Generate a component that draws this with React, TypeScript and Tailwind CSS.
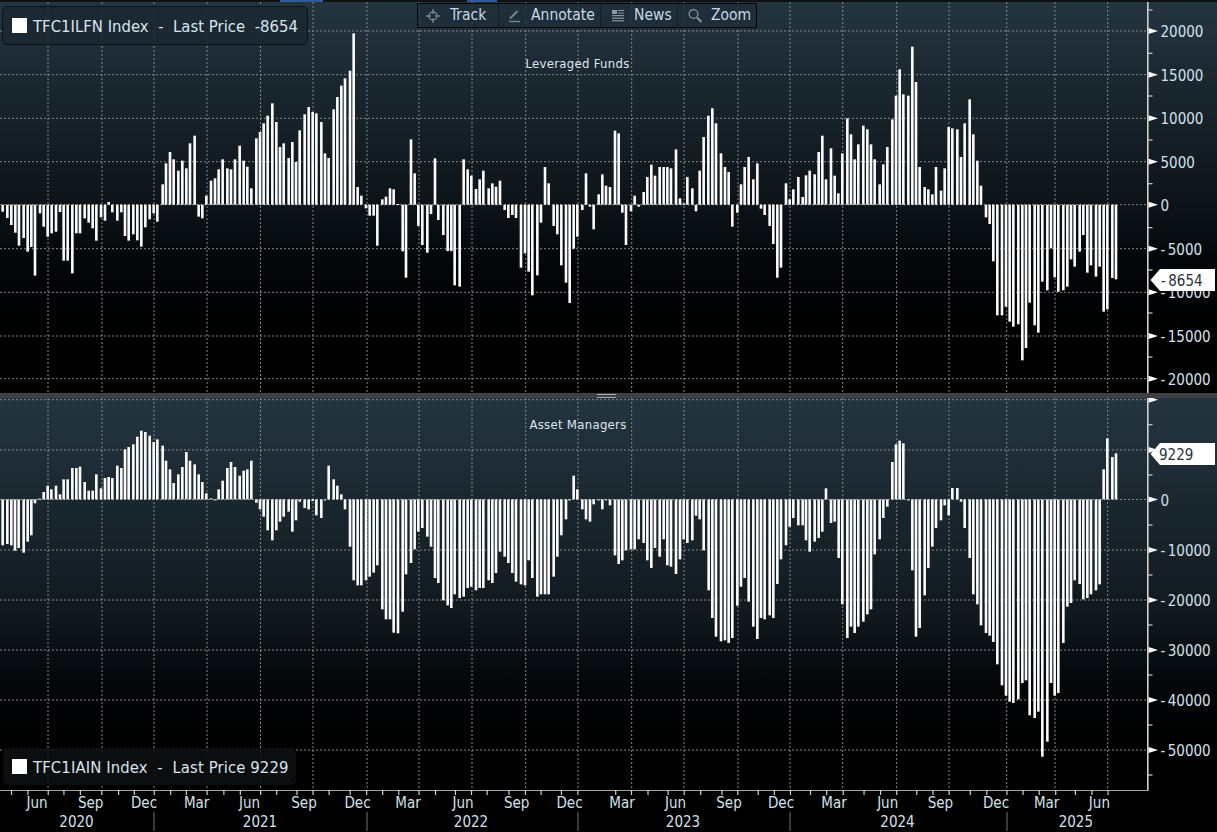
import React from "react";

const GX = [48,102,154,207,260.5,313,367,419,472,525.7,578,631.7,684,738,790,842.7,896.7,949,1006.7,1055,1107.7];

// flat [x3, y3] lists read from the picture, negative y3 = lower-crop value
const TOP: [number, number[]][] = [
  [0,[8,635,22,654,34,675,46,698,57,737,71,714,83,755,94,741,105,827,120,640,131,680,143,710,155,700,168,695,180,636,191,782,203,782,217,820,229,700,240,700,254,655,266,668,278,685,289,722,303,652,315,662,326,606,337,637,352,662,364,637,375,708,386,722,400,703,412,721,424,740,436,682,449,658,461,640,472,665,488,553,498,490,510,456,521,478,535,512,547,482,559,505,570,430,584,407,596,650,607,655,619,587,633,542,645,535,656,508,668,478,682,505,693,508,705,478,719,437,731,482,742,500,754,565,769,415,780,396,791,370,803,347,817,310,829,366,840,441,851,430,866,474,877,426,888,486,899,391,914,343,926,321,938,336,949,340,964,366,975,460,986,474,1001,328,1012,291,1024,257,1035,235,1050,212,1061,100,1073,561,1084,587,1098,625,1109,647,1121,647,1132,737,1147,598,1158,590,1170,565,1181,568,1194,612]],
  [1200,[8,-184,18,-263,33,418,44,520,55,-108,67,-165,82,-188,93,-72,105,475,115,-90,130,-135,143,-183,154,-183,164,-286,179,-290,191,478,203,508,214,527,228,567,239,538,250,512,266,565,277,550,288,560,300,542,314,-60,325,-84,337,-75,348,-84,363,-233,375,-190,386,-245,397,-316,412,-256,423,-98,435,501,446,550,461,-108,472,-133,484,-226,498,-278,509,-339,521,-176,532,-140,547,-60,558,520,570,-50,581,-118,596,583,607,523,618,557,630,561,645,392,656,400,667,-68,678,-165,693,-64,704,587,716,-50,731,576,742,531,754,494,765,527,779,501,791,501,802,501,813,505,828,448,840,595,851,610,862,531,877,565,888,-64,899,512,911,411,925,347,937,325,948,370,963,460,975,501,986,516,997,-110,1012,-68,1023,553,1034,501,1046,471,1060,538,1072,490,1083,-56,1094,-75,1109,-108,1120,-162,1132,-263,1143,-233,1158,550,1169,598,1180,568,1195,531]],
  [2400,[8,591,18,526,29,512,44,523,56,456,67,407,78,538,93,445,104,527,115,580,127,460,142,355,153,403,164,478,175,433,190,377,202,388,213,433,224,478,239,553,250,493,262,441,277,358,288,287,299,208,310,283,325,287,337,140,348,246,359,501,374,561,385,568,397,583,408,501,423,572,434,505,446,381,457,385,472,388,483,471,494,370,509,298,520,403,532,482,543,557,558,-82,569,-102,580,-214,592,-376,606,-376,618,-350,629,-395,640,-410,655,-403,667,-511,678,-474,689,-338,704,-406,715,-428,727,-275,742,-301,753,-175,764,-262,775,-305,790,-301,802,-290,813,-208,824,-230,839,-185,850,-135,862,-248,873,-226,888,-260,899,-230,911,-365,922,-358,937,-264,948,-268]],
];

const BOT: [number, number[]][] = [
  [0,[8,436,22,432,34,436,45,452,56,444,71,458,83,425,94,406,105,310,118,296,131,276,143,257,154,268,168,257,180,283,191,238,203,238,217,204,229,204,240,200,254,246,266,272,278,272,289,223,303,265,315,234,326,231,337,234,352,197,364,204,375,148,386,141,400,133,412,110,424,92,436,96,449,107,461,126,472,118,488,137,498,182,510,208,521,249,535,223,547,201,559,156,570,182,584,193,596,223,607,246,619,280,633,295,645,300,656,268,668,242,682,204,693,186,705,201,719,227,731,212,742,208,754,182,769,308,780,328,791,350,803,391,817,421,829,391,840,365,851,350,866,335,877,395,888,361,899,305,914,324,926,328,938,303,949,346,964,354,975,300,986,197,1001,238,1012,257,1024,283,1035,328,1050,440,1061,541,1073,556,1084,556,1098,541,1109,530,1121,518,1132,496,1147,628,1158,658,1170,658,1181,698,1194,700]],
  [1200,[8,635,18,523,33,489,44,448,55,395,67,384,82,410,93,440,105,534,115,549,130,601,143,616,154,624,164,583,179,594,191,590,203,564,214,560,228,571,239,564,250,564,266,541,277,549,288,519,300,455,314,470,325,489,337,519,348,545,363,553,375,556,386,481,397,534,412,590,423,583,435,583,446,583,461,530,472,470,484,406,498,358,509,300,521,227,532,268,547,328,558,358,570,365,581,313,596,300,607,328,618,300,630,316,645,466,656,492,667,481,678,451,693,448,704,448,716,418,731,429,742,481,754,504,765,444,779,470,791,418,802,496,813,500,828,522,840,478,851,418,862,429,877,421,888,347,899,358,911,451,926,571,937,654,948,710,963,724,975,721,986,729,997,714,1012,617,1023,560,1034,534,1046,605,1060,680,1072,717,1083,654,1094,658,1109,646,1120,654,1132,552,1143,478,1158,436,1169,380,1180,354,1195,376]],
  [2400,[8,376,18,421,29,455,44,425,56,414,67,395,78,265,93,369,104,365,116,474,127,613,142,714,153,680,164,699,175,680,190,665,202,643,213,628,224,463,239,418,250,354,262,320,277,186,288,133,299,122,310,130,325,300,337,511,348,710,359,684,374,586,385,504,397,440,408,384,423,361,434,316,446,346,457,264,472,264,483,305,494,384,509,474,520,583,532,613,543,676,558,699,569,707,580,726,592,793,606,856,618,887,629,905,640,909,655,898,667,849,678,841,689,946,704,954,715,935,727,1070,742,1025,753,849,764,887,775,879,790,729,802,620,813,609,824,541,839,552,850,598,862,594,873,583,888,571,899,553,911,208,922,115,937,171,948,160]],
];

const XT = [30,73,126,167,210,266,310,351,403,446,487,541,585,628,681,723,776,818,860,915,958,1000,1042,1095,1138,1190,1232,1273,1330,1373,1414,1467,1510].map((v) => v / 2.613)
  .concat([40,80,122,173,214,256,310,350,402,443,484,535,576,618,671,713,754,805,846,887,941,983,1034,1075,1116,1158,1208,1250,1291].map((v) => 600 + v / 2.541));

const MONTHS: [string, number][] = [["Jun",37],["Sep",90.7],["Dec",144],["Mar",196.7],["Jun",249.5],["Sep",304],["Dec",357.5],["Mar",408],["Jun",463],["Sep",516.7],["Dec",569.5],["Mar",622],["Jun",675.5],["Sep",729],["Dec",781],["Mar",834],["Jun",887.7],["Sep",940.4],["Dec",996],["Mar",1046.7],["Jun",1099.4]];
const YEARS: [string, number][] = [["2020",76.5],["2021",260],["2022",471],["2023",683],["2024",897.5],["2025",1075.8]];
const SEPS = [154,367,578,790,1007];

function Arrow({ y }: { y: number }) {
  return <polygon points={`1148.5,${y - 3} 1158,${y} 1148.5,${y + 3}`} className="fill-white" />;
}

function Bars({ data, map, base }: { data: [number, number[]][]; map: (y: number) => number; base: number }) {
  const out: React.ReactNode[] = [];
  data.forEach(([off, list], s) => {
    for (let i = 0; i < list.length; i += 2) {
      const x = (off + list[i]) / 3;
      const y = map(list[i + 1]);
      const top = Math.min(y, base);
      out.push(<rect key={`${s}-${i}`} x={x - 1.3} y={top} width={2.6} height={Math.max(Math.abs(y - base), 1)} className="fill-[#fbfbfb]" />);
    }
  });
  return <g>{out}</g>;
}

function Grid({ ys, y0, y1 }: { ys: number[]; y0: number; y1: number }) {
  return (
    <g className="stroke-[#85898c]" strokeWidth={1} strokeDasharray="2 2">
      {ys.map((y) => <line key={y} x1={0} x2={1148} y1={y} y2={y} />)}
      {GX.map((x) => <line key={x} x1={x} x2={x} y1={y0} y2={y1} />)}
    </g>
  );
}

function Num({ t }: { t: string }) {
  return t[0] === "-" ? (
    <>
      <tspan>-</tspan>
      <tspan dx={2.4}>{t.slice(1)}</tspan>
    </>
  ) : (
    <>{t}</>
  );
}

function Badge({ y, text, x }: { y: number; text: string; x: number }) {
  return (
    <g>
      <polygon points={`1150.5,${y} 1160,${y - 11} 1215,${y - 11} 1215,${y + 11} 1160,${y + 11}`} className="fill-white" />
      <text x={x} y={y + 5.5} className="fill-[#26323a] text-[15px]"><Num t={text} /></text>
    </g>
  );
}

function Axis({ y0, y1, majors, minors, labels }: { y0: number; y1: number; majors: number[]; minors: number[]; labels: [string, number][] }) {
  return (
    <g>
      <rect x={1147} y={y0} width={1.6} height={y1 - y0} className="fill-[#cfcfcf]" />
      {minors.map((y) => <rect key={y} x={1148} y={y - 0.6} width={4.5} height={1.2} className="fill-[#cfcfcf]" />)}
      {majors.map((y) => <Arrow key={y} y={y} />)}
      {labels.map(([t, y]) => <text key={t} x={1160.5} y={y + 6} className="fill-[#d3e0ec] text-[15px]"><Num t={t} /></text>)}
    </g>
  );
}

function Track() {
  return (
    <svg width="16" height="16" viewBox="0 0 16 16" fill="none" className="stroke-[#79838a] shrink-0">
      <circle cx="8" cy="8" r="4" strokeWidth="1.4" />
      <path d="M8 1v5M8 10v5M1 8h5M10 8h5" strokeWidth="1.4" />
    </svg>
  );
}
function Pencil() {
  return (
    <svg width="14" height="14" viewBox="0 0 14 14" fill="none" className="stroke-[#79838a] shrink-0">
      <path d="M2 9.5 9.5 2" strokeWidth="2" />
      <path d="M1 12.5h11" strokeWidth="1.4" />
    </svg>
  );
}
function NewsIcon() {
  return (
    <svg width="14" height="14" viewBox="0 0 14 14" className="fill-[#8d969c] shrink-0">
      <rect x="1" y="1" width="5" height="4" />
      <rect x="7" y="1" width="6" height="1" /><rect x="7" y="3.5" width="6" height="1" />
      <rect x="1" y="6" width="12" height="1.2" /><rect x="1" y="8.6" width="12" height="1.2" /><rect x="1" y="11.2" width="12" height="1.2" />
    </svg>
  );
}
function Mag() {
  return (
    <svg width="16" height="16" viewBox="0 0 16 16" fill="none" className="stroke-[#8d969c] shrink-0">
      <circle cx="6.5" cy="6" r="4.4" strokeWidth="1.2" />
      <path d="m10 9.5 4.5 4.5" strokeWidth="2" />
    </svg>
  );
}

function Tool({ icon, label, cls }: { icon: React.ReactNode; label: string; cls: string }) {
  return (
    <div className={`flex items-center h-full border-r border-[#151e24] last:border-r-0 ${cls}`}>
      {icon}
      <span className="text-[15.5px] text-[#c9d7e4]">{label}</span>
    </div>
  );
}

function Legend({ text, cls, textCls }: { text: string; cls: string; textCls: string }) {
  return (
    <div className={`absolute flex items-center gap-[6px] rounded-[5px] pl-[9px] whitespace-pre ${cls}`}>
      <span className="w-[15px] h-[15px] bg-white shrink-0" />
      <span className={`text-[16.5px] text-[#d8e4ee] pt-[4px] ${textCls}`}>{text}</span>
    </div>
  );
}

export default function App() {
  const topYs = [31, 74.7, 118.3, 161.7, 204.7, 248.7, 292.3, 336, 378.7];
  const botYs = [399.7, 449.9, 499.5, 550, 600, 650, 700, 750];
  return (
    <div className="w-[1217px] h-[832px] bg-black flex flex-col overflow-hidden font-['DejaVu_Sans_Condensed','Liberation_Sans',sans-serif]">
      <div className="h-[2px] flex bg-[#101010] shrink-0">
        <div className="w-[280px]" />
        <div className="w-[43px] bg-[#2a5aa8]" />
        <div className="w-[144px]" />
        <div className="w-[30px] bg-[#2a5aa8]" />
      </div>

      <div className="relative h-[391px] shrink-0 bg-linear-to-b from-[#243540] via-[#0e151a] via-50% to-[#000000]">
        <svg viewBox="0 2 1217 391" className="block w-full h-full">
          <Grid ys={topYs} y0={2} y1={393} />
          <Bars data={TOP} map={(v) => (v < 0 ? (-v + 570) / 3 : v / 3)} base={204.7} />
          <Axis
            y0={2} y1={393}
            majors={topYs}
            minors={[10, 53.3, 96, 140, 183.7, 227.7, 270, 313, 357]}
            labels={[["20000",31],["15000",74.7],["10000",118.3],["5000",161.7],["0",204.7],["-5000",248.7],["-10000",292.3],["-15000",336],["-20000",378.7]]}
          />
          <Badge y={280} text="-8654" x={1161} />
          <text x={577.5} y={67.5} textAnchor="middle" className="fill-[#dde7ef] text-[13px] tracking-[0.3px]">Leveraged Funds</text>
        </svg>
        <Legend text="TFC1ILFN Index  -  Last Price  -8654" cls="left-[2px] top-[4px] w-[306px] h-[39px] bg-[#1b2831]/90 border border-[#0b1115]" textCls="tracking-[0.03px]" />
        <div className="absolute left-[417px] top-[1px] w-[340px] h-[25px] flex items-center bg-[#1e2d37]/80 border border-[#05080a]">
          <Tool icon={<Track />} label="Track" cls="w-[81px] pl-[7px] gap-[9px]" />
          <Tool icon={<Pencil />} label="Annotate" cls="w-[102px] pl-[9px] gap-[9px]" />
          <Tool icon={<NewsIcon />} label="News" cls="w-[77px] pl-[10px] gap-[9px]" />
          <Tool icon={<Mag />} label="Zoom" cls="w-[78px] pl-[9px] gap-[8px]" />
        </div>
      </div>

      <div className="h-[5px] shrink-0 bg-[#3e4041] flex items-center justify-center pr-[4px]">
        <div className="w-[19px] h-[4px] border-y border-[#a8a8a8]" />
      </div>

      <div className="relative h-[392px] shrink-0 bg-linear-to-b from-[#243540] via-[#11191e] via-55% to-[#000000]">
        <svg viewBox="0 398 1217 392" className="block w-full h-full">
          <Grid ys={botYs} y0={398} y1={790} />
          <Bars data={BOT} map={(v) => 400 + v / 3} base={499.4} />
          <Axis
            y0={398} y1={790}
            majors={botYs}
            minors={[424.7, 475, 525, 575, 625, 675, 725, 775]}
            labels={[["0",499.5],["-10000",550],["-20000",600],["-30000",650],["-40000",700],["-50000",750]]}
          />
          <Badge y={454} text="9229" x={1159} />
          <text x={578} y={429} textAnchor="middle" className="fill-[#dde7ef] text-[13px] tracking-[0.3px]">Asset Managers</text>
        </svg>
        <Legend text="TFC1IAIN Index  -  Last Price 9229" cls="left-[3px] top-[350px] w-[293px] h-[37px] bg-[#0c0e0f]/90" textCls="tracking-[0.12px]" />
      </div>

      <svg viewBox="0 790 1217 42" className="block w-full h-[42px] shrink-0">
        <rect x={0} y={789.2} width={1148.6} height={1.6} className="fill-[#cfcfcf]" />
        {XT.map((x) => <rect key={x} x={x - 0.6} y={790} width={1.2} height={5} className="fill-[#cfcfcf]" />)}
        {MONTHS.map(([t, x]) => <text key={x} x={x} y={808} textAnchor="middle" className="fill-[#d3e0ec] text-[15px]">{t}</text>)}
        {YEARS.map(([t, x]) => <text key={t} x={x} y={827} textAnchor="middle" className="fill-[#d3e0ec] text-[15px]">{t}</text>)}
        {SEPS.map((x) => <rect key={x} x={x - 0.5} y={812} width={1} height={19} className="fill-[#6f7275]" />)}
      </svg>
    </div>
  );
}
